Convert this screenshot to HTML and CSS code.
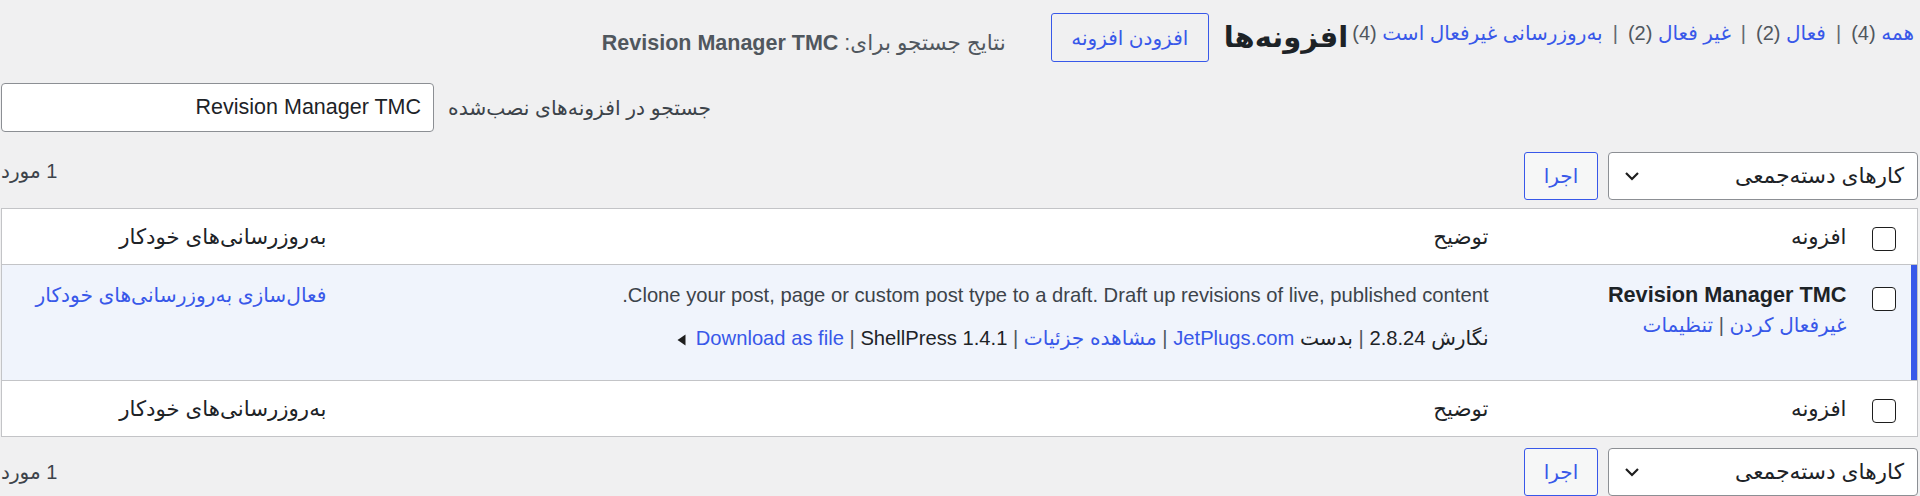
FILE: index.html
```html
<!DOCTYPE html>
<html lang="fa" dir="rtl">
<head>
<meta charset="utf-8">
<title>افزونه‌ها</title>
<link rel="stylesheet" href="styles.css">
</head>
<body>
<div class="wrap">
  <div class="head-row">
    <ul class="subsubsub">
      <li><a href="#">همه</a> <span class="count">(4)</span></li>
      <li class="sep">|</li>
      <li><a href="#">فعال</a> <span class="count">(2)</span></li>
      <li class="sep">|</li>
      <li><a href="#">غیر فعال</a> <span class="count">(2)</span></li>
      <li class="sep">|</li>
      <li><a href="#">به‌روزرسانی غیرفعال است</a> <span class="count">(4)</span></li>
    </ul>
    <h1 class="page-title">افزونه‌ها</h1>
    <a class="button add-new" href="#">افزودن افزونه</a>
    <span class="subtitle">نتایج جستجو برای: <strong>Revision Manager TMC</strong></span>
  </div>

  <div class="search-row">
    <label class="search-label" for="s">جستجو در افزونه‌های نصب‌شده</label>
    <input class="search-input" id="s" type="text" value="Revision Manager TMC">
  </div>

  <div class="tablenav">
    <div class="bulk-select">
      <span>کارهای دسته‌جمعی</span>
      <svg class="chev" width="16" height="10" viewBox="0 0 16 10"><path d="M2 2 L8 8 L14 2" fill="none" stroke="#1e1e1e" stroke-width="2.2"/></svg>
    </div>
    <a class="button apply" href="#">اجرا</a>
    <span class="displaying-num top-num">1 مورد</span>
  </div>

  <table class="plugins">
    <colgroup>
      <col class="c-check">
      <col class="c-name">
      <col class="c-desc">
      <col class="c-auto">
    </colgroup>
    <thead>
      <tr>
        <th class="check-col"><input type="checkbox" class="cb"></th>
        <th class="col-name">افزونه</th>
        <th class="col-desc">توضیح</th>
        <th class="col-auto">به‌روزرسانی‌های خودکار</th>
      </tr>
    </thead>
    <tbody>
      <tr class="active">
        <th class="check-col"><input type="checkbox" class="cb"></th>
        <td class="col-name">
          <strong class="plugin-name">Revision Manager TMC</strong>
          <div class="row-actions"><a href="#">غیرفعال کردن</a> <span class="sep">|</span> <a href="#">تنظیمات</a></div>
        </td>
        <td class="col-desc">
          <p class="desc">Clone your post, page or custom post type to a draft. Draft up revisions of live, published content.</p>
          <p class="meta">نگارش 2.8.24 <span class="sep">|</span> بدست <a href="#">JetPlugs.com</a> <span class="sep">|</span> <a href="#">مشاهده جزئیات</a> <span class="sep">|</span> <bdi>ShellPress 1.4.1</bdi> <span class="sep">|</span> <bdi><a href="#">Download as file</a></bdi> <svg class="tri" width="9" height="12" viewBox="0 0 9 12"><path d="M8.5 0.5 L8.5 11.5 L0.5 6 Z" fill="#1e1e1e"/></svg></p>
        </td>
        <td class="col-auto"><a href="#">فعال‌سازی به‌روزرسانی‌های خودکار</a></td>
      </tr>
    </tbody>
    <tfoot>
      <tr>
        <th class="check-col"><input type="checkbox" class="cb"></th>
        <th class="col-name">افزونه</th>
        <th class="col-desc">توضیح</th>
        <th class="col-auto">به‌روزرسانی‌های خودکار</th>
      </tr>
    </tfoot>
  </table>

  <div class="tablenav bottom">
    <div class="bulk-select">
      <span>کارهای دسته‌جمعی</span>
      <svg class="chev" width="16" height="10" viewBox="0 0 16 10"><path d="M2 2 L8 8 L14 2" fill="none" stroke="#1e1e1e" stroke-width="2.2"/></svg>
    </div>
    <a class="button apply" href="#">اجرا</a>
    <span class="displaying-num">1 مورد</span>
  </div>
</div>
</body>
</html>
```

FILE: styles.css
```css
html, body {
  margin: 0;
  padding: 0;
}
body {
  background: #f0f0f1;
  color: #3c434a;
  font-family: "Liberation Sans", "DejaVu Sans", sans-serif;
  font-size: 20px;
  overflow: hidden;
}
a {
  color: #3858e9;
  text-decoration: none;
}
.wrap {
  margin: 0 2px 0 1px;
}

/* header row */
.head-row {
  display: flex;
  align-items: flex-start;
  padding-top: 13px;
  height: 49px;
}
.subsubsub {
  list-style: none;
  margin: 5px 4px 0 0;
  padding: 0;
  display: flex;
  gap: 6px;
  line-height: 30px;
  font-size: 20px;
  color: #50575e;
}
.subsubsub li {
  white-space: nowrap;
}
.subsubsub .sep {
  color: #646970;
  margin: 0 4px;
}
.page-title {
  margin: 0 4px 0 0;
  font-size: 29px;
  font-weight: 700;
  color: #1d2327;
  line-height: 49px;
}
.button {
  display: inline-flex;
  align-items: center;
  justify-content: center;
  box-sizing: border-box;
  border: 1px solid #3858e9;
  border-radius: 3px;
  background: #f6f7f7;
  color: #3858e9;
  font-size: 20px;
  height: 49px;
}
.add-new {
  margin-right: 15px;
  width: 158px;
  background: transparent;
}
.subtitle {
  margin: 15px 45px 0 0;
  line-height: 30px;
  font-size: 21.5px;
  color: #50575e;
}
.subtitle strong {
  font-size: 21.5px;
}

/* search */
.search-row {
  display: flex;
  justify-content: flex-end;
  align-items: center;
  gap: 14px;
  margin-top: 21px;
  height: 49px;
}
.search-label {
  font-size: 20.3px;
  color: #3c434a;
}
.search-input {
  box-sizing: border-box;
  width: 433px;
  height: 49px;
  border: 1px solid #8c8f94;
  border-radius: 4px;
  background: #fff;
  font-family: "Liberation Sans", "DejaVu Sans", sans-serif;
  font-size: 21.5px;
  color: #1d2327;
  padding: 0 12px;
  direction: rtl;
  margin: 0;
}

/* tablenav */
.tablenav {
  display: flex;
  align-items: center;
  gap: 10px;
  margin-top: 20px;
  height: 48px;
}
.tablenav.bottom {
  margin-top: 11px;
}
.bulk-select {
  box-sizing: border-box;
  width: 310px;
  height: 48px;
  display: flex;
  align-items: center;
  justify-content: space-between;
  padding: 0 13px 0 15px;
  background: #fff;
  border: 1px solid #8c8f94;
  border-radius: 4px;
  font-size: 21.7px;
  color: #1d2327;
}
.apply {
  width: 74px;
  height: 48px;
}
.displaying-num {
  margin-right: auto;
  font-size: 20px;
  color: #3c434a;
}
.top-num {
  margin-bottom: 10px;
}

/* table */
.plugins {
  width: 100%;
  table-layout: fixed;
  border-collapse: collapse;
  border: 1px solid #c3c4c7;
  background: #fff;
  margin-top: 8px;
}
.c-check { width: 60px; }
.c-name { width: 358px; }
.c-auto { width: 336px; }
.plugins th,
.plugins td {
  text-align: right;
  font-weight: 400;
  vertical-align: top;
  line-height: 30px;
  font-size: 20px;
  color: #1d2327;
}
.plugins thead th,
.plugins tfoot th {
  padding: 13px 11px 12px 10px;
  height: 30px;
  font-size: 21.3px;
}
.plugins thead tr {
  border-bottom: 1px solid #c3c4c7;
}
.plugins tfoot tr {
  border-top: 1px solid #c3c4c7;
}
.plugins thead th.check-col,
.plugins tfoot th.check-col {
  padding: 18px 21px 0 0;
}
.cb {
  appearance: none;
  -webkit-appearance: none;
  box-sizing: border-box;
  width: 24px;
  height: 24px;
  margin: 0;
  border: 1.5px solid #1e1e1e;
  border-radius: 4px;
  background: #fff;
  display: block;
}
.plugins tbody tr.active td,
.plugins tbody tr.active th {
  background: #f0f4fc;
}
.plugins tbody th.check-col {
  padding: 22px 21px 0 0;
  box-shadow: inset -6px 0 0 #3858e9;
}
.plugins tbody td {
  padding: 15px 11px 27px 10px;
}
.plugin-name {
  display: block;
  font-weight: 700;
  font-size: 21.7px;
  color: #1d2327;
  line-height: 30px;
}
.row-actions {
  line-height: 30px;
  font-size: 20px;
}
.row-actions .sep,
.meta .sep {
  color: #50575e;
}
.desc {
  margin: 0;
  font-size: 20.2px;
  color: #3c434a;
}
.meta {
  margin: 13px 0 0 0;
  font-size: 20.2px;
  color: #1d2327;
}
.tri {
  vertical-align: middle;
  margin-right: 4px;
}
.col-auto a {
  font-size: 20.2px;
}
```
